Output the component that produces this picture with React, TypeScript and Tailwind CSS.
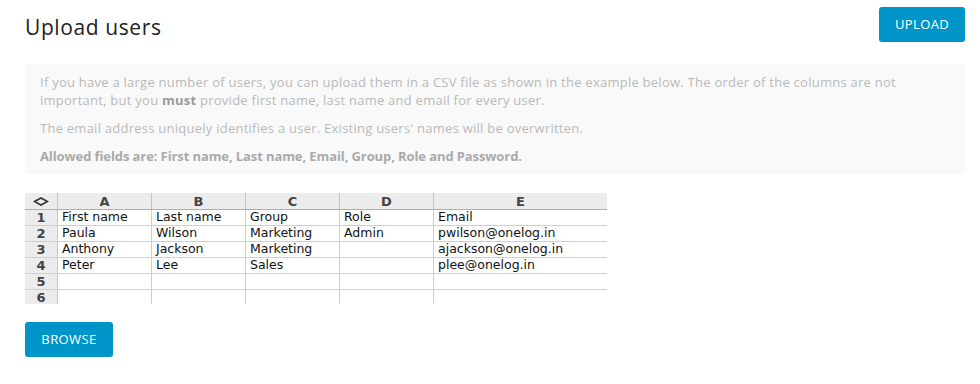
const columns = [
  { label: "A", width: "w-[94px]" },
  { label: "B", width: "w-[94px]" },
  { label: "C", width: "w-[94px]" },
  { label: "D", width: "w-[94px]" },
  { label: "E", width: "w-[173px]" },
]

const rows = [
  ["First name", "Last name", "Group", "Role", "Email"],
  ["Paula", "Wilson", "Marketing", "Admin", "pwilson@onelog.in"],
  ["Anthony", "Jackson", "Marketing", "", "ajackson@onelog.in"],
  ["Peter", "Lee", "Sales", "", "plee@onelog.in"],
  ["", "", "", "", ""],
  ["", "", "", "", ""],
]

const CornerIcon = () => (
  <svg width="16" height="9" viewBox="0 0 16 9" fill="none">
    <path d="M1.5 4.5 L8 1 L14.5 4.5 L8 8 Z" stroke="#333" strokeWidth="1.6" strokeLinejoin="miter" />
  </svg>
)

const Sheet = () => (
  <div className="w-[582px] font-['DejaVu_Sans',sans-serif] text-[12.5px] leading-none text-[#111]">
    <div className="flex h-[17px] bg-[#ececec] border-b border-[#a7b0bb]">
      <div className="w-[33px] flex items-center justify-center border-r border-[#c4c4c4]">
        <CornerIcon />
      </div>
      {columns.map((col) => (
        <div
          key={col.label}
          className={`${col.width} flex items-center justify-center font-bold text-[13px] text-[#444] border-r border-[#c4c4c4] last:border-r-0`}
        >
          {col.label}
        </div>
      ))}
    </div>
    {rows.map((row, i) => (
      <div key={i} className={`flex ${i < rows.length - 1 ? "h-[16px] border-b border-[#cfcfcf]" : "h-[14px]"}`}>
        <div className="w-[33px] flex items-center justify-center bg-[#ececec] font-bold text-[13px] text-[#444] border-r border-[#c4c4c4]">
          {i + 1}
        </div>
        {row.map((cell, j) => (
          <div
            key={j}
            className={`${columns[j].width} flex items-center px-[4px] border-r border-[#cfcfcf] last:border-r-0`}
          >
            {cell}
          </div>
        ))}
      </div>
    ))}
  </div>
)

export default function App() {
  return (
    <div className="w-[980px] h-[384px] bg-white font-['Open_Sans',sans-serif] px-[25px] pt-[7px]">
      <div className="flex items-start justify-between w-[940px]">
        <h1 className="mt-[8px] text-[21px] leading-[24px] text-[#222] tracking-[0.6px]">Upload users</h1>
        <button className="w-[86px] h-[35px] rounded-[3px] bg-[#0095c8] text-white text-[13px] tracking-[0.4px]">
          UPLOAD
        </button>
      </div>

      <div className="mt-[22px] w-[940px] bg-[#f9f9f9] px-[15px] pt-[9px] pb-[9px] text-[13px] leading-[18px] tracking-[0.25px] text-[#b9b9b9]">
        <p>
          If you have a large number of users, you can upload them in a CSV file as shown in the example below. The order of the
          columns are not
          <br />
          important, but you <b className="font-bold text-[#999]">must</b> provide first name, last name and email for every user.
        </p>
        <p className="mt-[10px]">The email address uniquely identifies a user. Existing users' names will be overwritten.</p>
        <p className="mt-[10px] font-bold tracking-[-0.1px] text-[#aaa]">Allowed fields are: First name, Last name, Email, Group, Role and Password.</p>
      </div>

      <div className="mt-[19px]">
        <Sheet />
      </div>

      <button className="mt-[18px] w-[88px] h-[35px] rounded-[3px] bg-[#0095c8] text-white text-[13px] tracking-[0.4px]">
        BROWSE
      </button>
    </div>
  )
}
